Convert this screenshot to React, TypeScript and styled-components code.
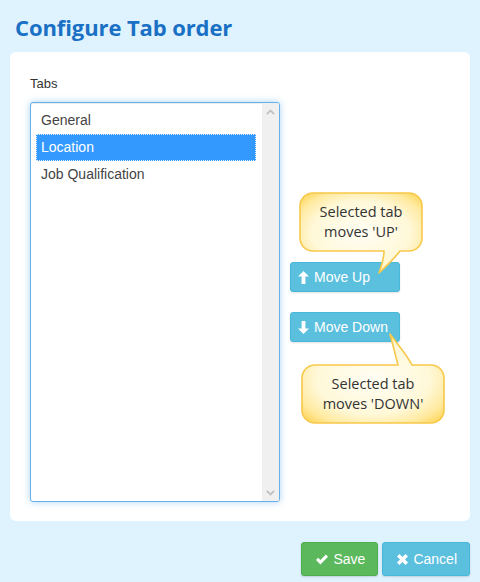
import React from "react";
import styled, { createGlobalStyle } from "styled-components";

const Global = createGlobalStyle`
  html, body { margin: 0; padding: 0; background: #dff3fe; }
  body { font-family: "Liberation Sans", Arial, sans-serif; color: #333; }
  * { box-sizing: border-box; }
`;

const Page = styled.div`
  width: 480px;
  height: 582px;
  padding: 12px 10px 0 10px;
  background: #dff3fe;
`;

const Title = styled.h1`
  margin: 0 0 10px 5px;
  height: 30px;
  line-height: 30px;
  font-family: "Open Sans", "Noto Sans", sans-serif;
  font-weight: 700;
  font-size: 22px;
  color: #1a70c4;
  letter-spacing: -0.1px;
`;

const Panel = styled.div`
  background: #fff;
  border-radius: 6px;
  padding: 20px;
  height: 469px;
`;

const Label = styled.div`
  font-size: 13px;
  line-height: 18px;
  height: 18px;
  margin: 3px 0 9px 0;
  color: #333;
`;

const Body = styled.div`
  display: flex;
  gap: 10px;
  height: 400px;
`;

const ListBox = styled.div`
  width: 250px;
  height: 400px;
  border: 1px solid #66afe9;
  border-radius: 3px;
  box-shadow: inset 0 1px 1px rgba(0, 0, 0, 0.075), 0 0 7px rgba(102, 175, 233, 0.55);
  display: flex;
  overflow: hidden;
  background: #fff;
`;

const List = styled.div`
  flex: 1;
  padding: 4px 6px 0 5px;
`;

const Item = styled.div<{ $selected?: boolean }>`
  height: 27px;
  line-height: 27px;
  padding-left: 5px;
  font-size: 14px;
  color: ${(p) => (p.$selected ? "#fff" : "#444")};
  background: ${(p) => (p.$selected ? "#3399ff" : "transparent")};
  outline: ${(p) => (p.$selected ? "1px dotted rgba(255,255,255,0.85)" : "none")};
  outline-offset: -1px;
`;

const Scrollbar = styled.div`
  width: 17px;
  background: #f0f0f0;
  display: flex;
  flex-direction: column;
  justify-content: space-between;
  align-items: center;
  padding: 6px 0 5px 0;
`;

const Column = styled.div`
  position: relative;
  flex: 1;
  display: flex;
  flex-direction: column;
  justify-content: center;
  align-items: flex-start;
  gap: 20px;
`;

const InfoButton = styled.button`
  width: 110px;
  height: 30px;
  display: flex;
  align-items: center;
  gap: 5px;
  padding: 0 0 0 7px;
  border: 1px solid #46b8da;
  border-radius: 3px;
  background: #5bc0de;
  color: #fff;
  font-family: "Liberation Sans", Arial, sans-serif;
  font-size: 14px;
  box-shadow: 0 1px 2px rgba(0, 0, 0, 0.12);
`;

const BubbleWrap = styled.div<{ $left: number; $top: number; $w: number; $h: number }>`
  position: absolute;
  left: ${(p) => p.$left}px;
  top: ${(p) => p.$top}px;
  width: ${(p) => p.$w}px;
  height: ${(p) => p.$h}px;
  z-index: 2;
  display: flex;
  align-items: center;
  justify-content: center;
  text-align: center;
  font-family: "Open Sans", "Noto Sans", sans-serif;
  font-size: 14.5px;
  line-height: 20px;
  color: #333;
  & > svg {
    position: absolute;
    left: 0;
    top: 0;
    overflow: visible;
  }
  & > span {
    position: relative;
  }
`;

const Footer = styled.div`
  display: flex;
  justify-content: flex-end;
  gap: 4px;
  margin-top: 21px;
`;

const FooterButton = styled.button<{ $variant: "success" | "info" }>`
  height: 34px;
  display: flex;
  align-items: center;
  gap: 5px;
  padding: 0 12px 0 14px;
  border-radius: 3px;
  border: 1px solid ${(p) => (p.$variant === "success" ? "#4cae4c" : "#46b8da")};
  background: ${(p) => (p.$variant === "success" ? "#5cb85c" : "#5bc0de")};
  color: #fff;
  font-family: "Liberation Sans", Arial, sans-serif;
  font-size: 14px;
  box-shadow: 0 1px 2px rgba(0, 0, 0, 0.15);
`;

type BubbleProps = {
  id: string;
  left: number;
  top: number;
  w: number;
  h: number;
  tail: string;
  children: React.ReactNode;
};

function bubblePath(w: number, h: number, r: number, tail: { side: "top" | "bottom"; a: number; b: number; tx: number; ty: number }) {
  if (tail.side === "bottom") {
    return `M ${r} 0 H ${w - r} A ${r} ${r} 0 0 1 ${w} ${r} V ${h - r} A ${r} ${r} 0 0 1 ${w - r} ${h} H ${tail.b} Q ${tail.b - 6} ${h + 8} ${tail.tx} ${tail.ty} Q ${tail.a} ${h + 8} ${tail.a} ${h} H ${r} A ${r} ${r} 0 0 1 0 ${h - r} V ${r} A ${r} ${r} 0 0 1 ${r} 0 Z`;
  }
  return `M ${r} 0 H ${tail.a} Q ${tail.a - 2} -8 ${tail.tx} ${tail.ty} Q ${tail.b - 4} -8 ${tail.b} 0 H ${w - r} A ${r} ${r} 0 0 1 ${w} ${r} V ${h - r} A ${r} ${r} 0 0 1 ${w - r} ${h} H ${r} A ${r} ${r} 0 0 1 0 ${h - r} V ${r} A ${r} ${r} 0 0 1 ${r} 0 Z`;
}

function Bubble({ id, left, top, w, h, tail, children }: BubbleProps) {
  return (
    <BubbleWrap $left={left} $top={top} $w={w} $h={h}>
      <svg width={w} height={h}>
        <defs>
          <radialGradient id={id} cx="50%" cy="50%" r="65%">
            <stop offset="0%" stopColor="#fffef4" />
            <stop offset="62%" stopColor="#fff8d8" />
            <stop offset="86%" stopColor="#ffeaa0" />
            <stop offset="100%" stopColor="#ffd966" />
          </radialGradient>
        </defs>
        <path d={tail} fill={`url(#${id})`} stroke="#f7c84a" strokeWidth={1.6} strokeLinejoin="round" />
      </svg>
      <span>{children}</span>
    </BubbleWrap>
  );
}

const ArrowUp = () => (
  <svg width="11" height="13" viewBox="0 0 11 13">
    <path d="M5.5 0 L11 5.6 L7.4 5.6 L7.4 13 L3.6 13 L3.6 5.6 L0 5.6 Z" fill="#fff" />
  </svg>
);
const ArrowDown = () => (
  <svg width="11" height="13" viewBox="0 0 11 13">
    <path d="M5.5 13 L11 7.4 L7.4 7.4 L7.4 0 L3.6 0 L3.6 7.4 L0 7.4 Z" fill="#fff" />
  </svg>
);
const Check = () => (
  <svg width="12" height="11" viewBox="0 0 13 11">
    <path d="M0 6 L2.3 3.6 L4.8 6.1 L10.7 0.2 L13 2.6 L4.8 10.8 Z" fill="#fff" />
  </svg>
);
const Cross = () => (
  <svg width="11" height="11" viewBox="0 0 11 11">
    <path d="M0 2.4 L2.4 0 L5.5 3.1 L8.6 0 L11 2.4 L7.9 5.5 L11 8.6 L8.6 11 L5.5 7.9 L2.4 11 L0 8.6 L3.1 5.5 Z" fill="#fff" />
  </svg>
);
const ChevUp = () => (
  <svg width="9" height="6" viewBox="0 0 9 6">
    <path d="M0.8 5.2 L4.5 1.5 L8.2 5.2" fill="none" stroke="#c2c2c2" strokeWidth="1.8" />
  </svg>
);
const ChevDown = () => (
  <svg width="9" height="6" viewBox="0 0 9 6">
    <path d="M0.8 0.8 L4.5 4.5 L8.2 0.8" fill="none" stroke="#c2c2c2" strokeWidth="1.8" />
  </svg>
);

const tabs = ["General", "Location", "Job Qualification"];

export default function App() {
  const upPath = bubblePath(122, 58, 13, { side: "bottom", a: 84, b: 100, tx: 79, ty: 80 });
  const downPath = bubblePath(142, 58, 13, { side: "top", a: 96, b: 110, tx: 88, ty: -31 });
  return (
    <Page>
      <Global />
      <Title>Configure Tab order</Title>
      <Panel>
        <Label>Tabs</Label>
        <Body>
          <ListBox>
            <List>
              {tabs.map((t) => (
                <Item key={t} $selected={t === "Location"}>
                  {t}
                </Item>
              ))}
            </List>
            <Scrollbar>
              <ChevUp />
              <ChevDown />
            </Scrollbar>
          </ListBox>
          <Column>
            <InfoButton>
              <ArrowUp />
              Move Up
            </InfoButton>
            <InfoButton>
              <ArrowDown />
              Move Down
            </InfoButton>
            <Bubble id="bubUp" left={10} top={91} w={122} h={58} tail={upPath}>
              Selected tab
              <br />
              moves 'UP'
            </Bubble>
            <Bubble id="bubDown" left={12} top={263} w={142} h={58} tail={downPath}>
              Selected tab
              <br />
              moves 'DOWN'
            </Bubble>
          </Column>
        </Body>
      </Panel>
      <Footer>
        <FooterButton $variant="success">
          <Check />
          Save
        </FooterButton>
        <FooterButton $variant="info">
          <Cross />
          Cancel
        </FooterButton>
      </Footer>
    </Page>
  );
}
